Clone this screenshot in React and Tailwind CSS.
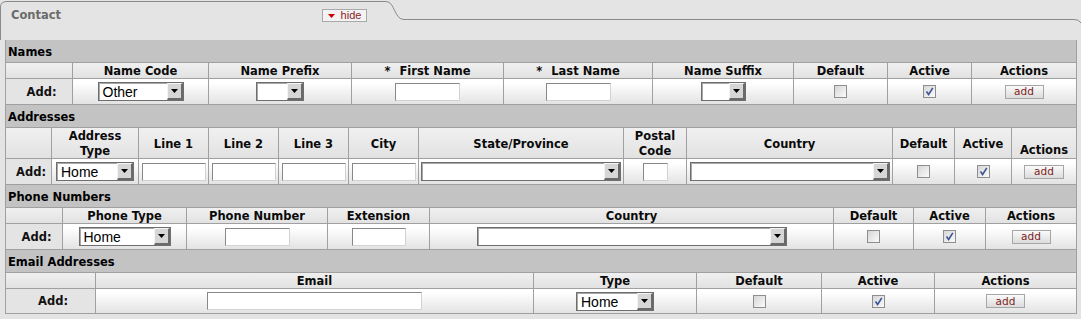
import React from "react";

const BORDER = "border-[#a0a0a0]";

function Tri({ className = "fill-black" }) {
  return (
    <svg width="7" height="4" viewBox="0 0 7 4" className={className}>
      <path d="M0 0H7L3.5 4Z" />
    </svg>
  );
}

function Select({ w, text = "" }) {
  return (
    <span
      className={`inline-flex h-[19px] ${w} items-stretch border border-[#6e6e6e] bg-white shadow-[inset_1px_1px_0_#a8a8a8]`}
    >
      <span className="flex-1 overflow-hidden whitespace-nowrap pl-[4px] font-['Liberation_Sans',Arial,sans-serif] text-[14px] leading-[18px] font-normal text-black">
        {text}
      </span>
      <span className="flex w-[16px] items-center justify-center border-t border-l border-t-[#f4f4f4] border-l-[#f4f4f4] border-r-2 border-b-2 border-r-[#6a6a6a] border-b-[#6a6a6a] bg-[#d6d6d6]">
        <Tri />
      </span>
    </span>
  );
}

function Input({ w }) {
  return (
    <span
      className={`inline-block h-[18px] ${w} border border-t-[#888888] border-l-[#888888] border-r-[#d2d2d2] border-b-[#d2d2d2] bg-white`}
    />
  );
}

function Check({ checked }) {
  return (
    <span className="inline-flex h-[13px] w-[13px] items-center justify-center border border-[#8e8e8e] bg-linear-to-br from-[#d6d6d6] to-[#fbfbfb]">
      {checked && (
        <svg width="9" height="9" viewBox="0 0 9 9">
          <path d="M1.5 4.5 L3.6 7.5 L7.8 0.8" fill="none" stroke="#3d5596" strokeWidth="1.6" />
        </svg>
      )}
    </span>
  );
}

function AddBtn({ w = "w-[39px]" }) {
  return (
    <span
      className={`inline-flex h-[14px] ${w} items-center justify-center border border-[#a6a6a6] bg-linear-to-b from-[#fafafa] to-[#dcdcdc] font-['DejaVu_Sans',Verdana,sans-serif] text-[10.5px] leading-none font-normal text-[#7d1d1d]`}
    >
      add
    </span>
  );
}

function Star({ children }) {
  return (
    <span>
      <span className="mr-[9px]">*</span>
      {children}
    </span>
  );
}

function SectionHeader({ title, first }) {
  return (
    <div
      className={`flex items-center border-l border-r ${BORDER} bg-[#c3c3c3] pt-[3px] pl-[2px] text-[11.5px] font-bold text-black ${
        first ? "h-[22px]" : "h-[23px] border-t"
      }`}
    >
      {title}
    </div>
  );
}

function Section({ title, first, cols, headRow, headers, cells, last, endIdx }) {
  const n = headers.length;
  return (
    <div>
      <SectionHeader title={title} first={first} />
      <div className={`grid ${cols}`}>
        {headers.map((h, i) => (
          <div
            key={"h" + i}
            className={`flex justify-center border-l border-t ${BORDER} bg-linear-to-b from-[#f0f0f0] to-[#e2e2e2] text-center text-[11.5px] leading-[15px] font-bold text-[#0a0a0a] ${headRow} ${
              i === n - 1 ? "border-r" : ""
            } ${endIdx && i === endIdx ? "items-end" : "items-center pt-[2px]"}`}
          >
            {h}
          </div>
        ))}
        {cells.map((c, i) => (
          <div
            key={"c" + i}
            className={`flex h-[26px] items-center justify-center border-l border-t ${BORDER} ${
              i === 0
                ? "bg-[#e4e4e4] pt-[2px] pl-[5px] text-[11.5px] font-bold text-[#111]"
                : "bg-linear-to-b from-white from-[15%] to-[#e3e3e3]"
            } ${i === n - 1 ? "border-r" : ""} ${last ? "border-b" : ""}`}
          >
            {c}
          </div>
        ))}
      </div>
    </div>
  );
}

export default function App() {
  return (
    <div className="relative h-[319px] w-[1081px] overflow-hidden bg-[#e4e4e4] font-['DejaVu_Sans',Verdana,sans-serif]">
      <svg
        className="pointer-events-none absolute top-0 left-0"
        width="1081"
        height="40"
        viewBox="0 0 1081 40"
      >
        <path
          d="M0.5 40 L0.5 7 Q0.5 1.5 7 1.5 L386 1.5 C395 1.5 394 19.5 404 19.5 L1074 19.5 Q1079.5 19.5 1081 23"
          fill="none"
          stroke="#8a8a8a"
          strokeWidth="1"
        />
      </svg>
      <div className="relative flex h-[40px] w-[390px] items-start justify-between pt-[8px] pr-[23px] pl-[11px]">
        <span className="text-[11.5px] leading-[14px] font-bold text-[#6b6b6b]">Contact</span>
        <span className="mt-[1px] flex h-[13px] w-[45px] items-center justify-center gap-[6px] border border-[#a9a9a9] bg-[#f3f3f3] font-['Liberation_Sans',Arial,sans-serif] text-[11px] leading-none text-[#8a1c1c]">
          <Tri className="fill-[#cc0000]" />
          <span>hide</span>
        </span>
      </div>

      <div className="ml-[5px] w-[1072px]">
        <Section
          title="Names"
          first
          cols="grid-cols-[67px_136px_143px_152px_149px_141px_94px_84px_106px]"
          headRow="h-[16px]"
          headers={[
            "",
            "Name Code",
            "Name Prefix",
            <Star key="f">First Name</Star>,
            <Star key="l">Last Name</Star>,
            "Name Suffix",
            "Default",
            "Active",
            "Actions",
          ]}
          cells={[
            "Add:",
            <Select key="a" w="w-[86px]" text="Other" />,
            <Select key="b" w="w-[48px]" />,
            <Input key="c" w="w-[65px]" />,
            <Input key="d" w="w-[65px]" />,
            <Select key="e" w="w-[45px]" />,
            <Check key="f" />,
            <Check key="g" checked />,
            <AddBtn key="h" />,
          ]}
        />
        <Section
          title="Addresses"
          cols="grid-cols-[46px_87px_70px_70px_70px_70px_205px_63px_206px_62px_57px_66px]"
          headRow="h-[31px]"
          endIdx={11}
          headers={[
            "",
            <span key="t">
              Address
              <br />
              Type
            </span>,
            "Line 1",
            "Line 2",
            "Line 3",
            "City",
            "State/Province",
            <span key="p">
              Postal
              <br />
              Code
            </span>,
            "Country",
            "Default",
            "Active",
            "Actions",
          ]}
          cells={[
            "Add:",
            <Select key="a" w="w-[78px]" text="Home" />,
            <Input key="b" w="w-[64px]" />,
            <Input key="c" w="w-[64px]" />,
            <Input key="d" w="w-[64px]" />,
            <Input key="e" w="w-[64px]" />,
            <Select key="f" w="w-[200px]" />,
            <Input key="g" w="w-[25px]" />,
            <Select key="h" w="w-[200px]" />,
            <Check key="i" />,
            <Check key="j" checked />,
            <AddBtn key="k" w="w-[40px]" />,
          ]}
        />
        <Section
          title="Phone Numbers"
          cols="grid-cols-[57px_124px_141px_102px_404px_80px_72px_92px]"
          headRow="h-[16px]"
          headers={["", "Phone Type", "Phone Number", "Extension", "Country", "Default", "Active", "Actions"]}
          cells={[
            "Add:",
            <Select key="a" w="w-[92px]" text="Home" />,
            <Input key="b" w="w-[65px]" />,
            <Input key="c" w="w-[54px]" />,
            <Select key="d" w="w-[310px]" />,
            <Check key="e" />,
            <Check key="f" checked />,
            <AddBtn key="g" />,
          ]}
        />
        <Section
          title="Email Addresses"
          last
          cols="grid-cols-[90px_438px_163px_125px_113px_143px]"
          headRow="h-[16px]"
          headers={["", "Email", "Type", "Default", "Active", "Actions"]}
          cells={[
            "Add:",
            <Input key="a" w="w-[215px]" />,
            <Select key="b" w="w-[78px]" text="Home" />,
            <Check key="c" />,
            <Check key="d" checked />,
            <AddBtn key="e" />,
          ]}
        />
      </div>
    </div>
  );
}
